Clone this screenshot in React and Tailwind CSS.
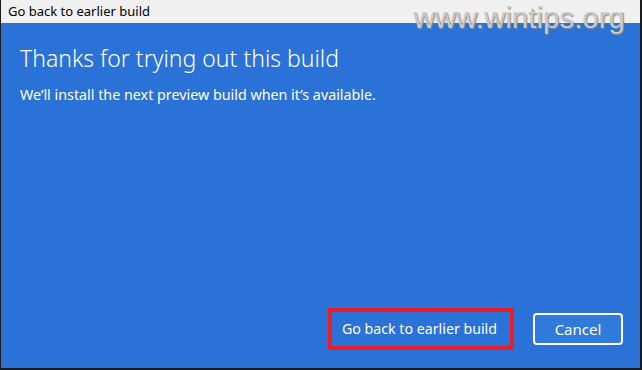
export default function App() {
  return (
    <div
      className="relative flex h-[370px] w-[642px] flex-col overflow-hidden border-b-2 border-l border-r-2 border-[#1a1a1a] bg-[#2a72d7]"
      style={{ fontFamily: '"Noto Sans", "Open Sans", sans-serif' }}
    >
      <div className="flex h-[23px] shrink-0 items-center bg-[#f0f0f0] pl-[7px] text-[13px] text-black">
        Go back to earlier build
      </div>

      <div className="flex flex-1 flex-col pl-[19px] pr-[17px] pt-[20px]">
        <h1 className="text-[23px] leading-[30px] font-light text-white">
          Thanks for trying out this build
        </h1>
        <p className="mt-[13px] text-[14.3px] leading-[18px] text-white">
          We’ll install the next preview build when it’s available.
        </p>

        <div className="mt-auto mb-[18px] flex items-center justify-end gap-[19px]">
          <div className="flex h-[42px] items-center border-[4px] border-[#ee1c25] pl-[10px] pr-[13px]">
            <button className="text-[14.2px] text-white">
              Go back to earlier build
            </button>
          </div>
          <button className="flex h-[32px] w-[90px] items-center justify-center rounded-[4px] border-2 border-white bg-[#2f7adb] text-[15px] text-white">
            Cancel
          </button>
        </div>
      </div>

      <div
        className="absolute top-[1px] right-[15px] text-[29.5px] leading-[34px] text-[#c9c9c9]"
        style={{ fontFamily: '"Liberation Sans", Arial, sans-serif', textShadow: "1px 1px 1px #8a8a8a" }}
      >
        www.wintips.org
      </div>
    </div>
  );
}
